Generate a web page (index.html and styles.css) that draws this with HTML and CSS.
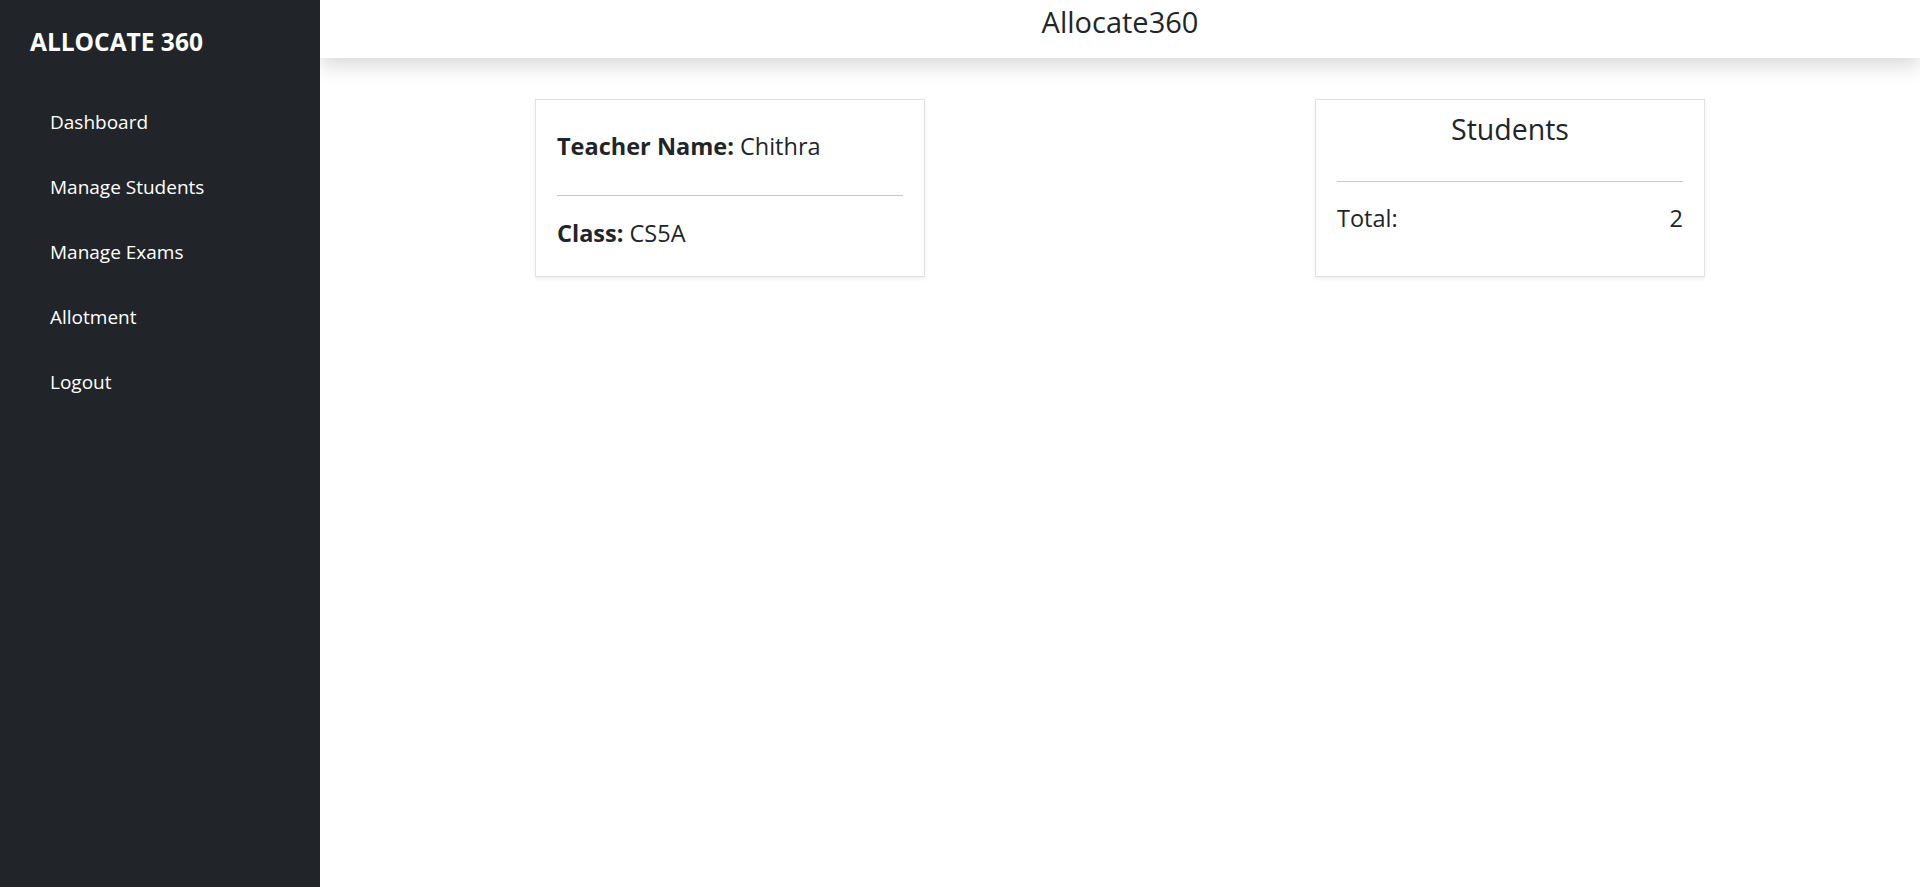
FILE: index.html
```html
<!DOCTYPE html>
<html lang="en">
<head>
<meta charset="utf-8">
<title>Allocate360</title>
<link rel="stylesheet" href="styles.css">
</head>
<body>
<div class="layout">
  <aside class="sidebar">
    <div class="brand">ALLOCATE 360</div>
    <nav class="nav">
      <a class="nav-link" href="#">Dashboard</a>
      <a class="nav-link" href="#">Manage Students</a>
      <a class="nav-link" href="#">Manage Exams</a>
      <a class="nav-link" href="#">Allotment</a>
      <a class="nav-link" href="#">Logout</a>
    </nav>
  </aside>
  <div class="main">
    <header class="topbar">
      <h1 class="title">Allocate360</h1>
    </header>
    <section class="content">
      <div class="card card-info">
        <p class="line"><strong>Teacher Name:</strong> Chithra</p>
        <hr class="divider divider-info">
        <p class="line"><strong>Class:</strong> CS5A</p>
      </div>
      <div class="card card-stats">
        <h2 class="card-title">Students</h2>
        <hr class="divider divider-stats">
        <div class="line stat-row"><span>Total:</span><span>2</span></div>
      </div>
    </section>
  </div>
</div>
</body>
</html>
```

FILE: styles.css
```css
* { box-sizing: border-box; }
html, body { margin: 0; padding: 0; height: 100%; }
body {
  font-family: "Open Sans", "Noto Sans", "Liberation Sans", sans-serif;
  color: #212529;
  background: #fff;
}
.layout { display: flex; height: 887px; }
.sidebar {
  width: 320px;
  flex: none;
  background: #212529;
  color: #fff;
  padding-top: 25px;
  position: relative;
  z-index: 2;
}
.brand {
  font-size: 24.5px;
  font-weight: 700;
  line-height: 34px;
  padding-left: 30px;
}
.nav { display: flex; flex-direction: column; margin-top: 31px; }
.nav-link {
  display: block;
  color: #fff;
  text-decoration: none;
  font-size: 19px;
  line-height: 25px;
  padding: 20px 0 20px 50px;
}
.main { flex: 1; display: flex; flex-direction: column; }
.topbar {
  height: 58px;
  background: #fff;
  box-shadow: 0 8px 20px rgba(0, 0, 0, 0.15);
  display: flex;
  justify-content: center;
  padding-top: 4px;
  position: relative;
  z-index: 1;
}
.title {
  margin: 0;
  font-size: 29px;
  font-weight: 400;
  line-height: 36px;
}
.content {
  display: flex;
  justify-content: space-between;
  align-items: flex-start;
  padding: 41px 215px 0 215px;
}
.card {
  width: 390px;
  height: 178px;
  border: 1px solid #dfe1e5;
  box-shadow: 0 2px 4px rgba(0, 0, 0, 0.06);
  background: #fff;
  padding: 0 21px;
}
.card-info { padding-top: 31px; }
.card-stats { padding-top: 11px; }
.line {
  margin: 0;
  font-size: 23.5px;
  line-height: 30px;
}
.line strong { font-weight: 700; }
.divider {
  border: 0;
  border-top: 1px solid #c8c9cc;
  height: 0;
  margin: 0;
}
.divider-info { margin: 34px 0 22px; }
.divider-stats { margin: 34px 0 21px; }
.card-title {
  margin: 0;
  text-align: center;
  font-size: 28.5px;
  font-weight: 400;
  line-height: 36px;
}
.stat-row { display: flex; justify-content: space-between; }
```
